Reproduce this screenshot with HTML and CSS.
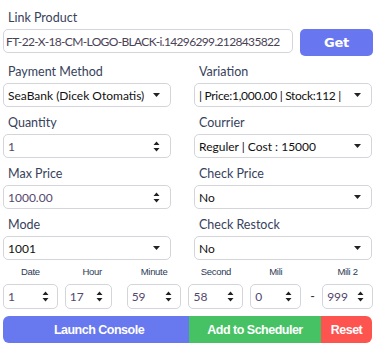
FILE: index.html
```html
<!DOCTYPE html>
<html lang="en">
<head>
    <meta charset="UTF-8">
    <title>Checkout Form</title>
    <link rel="stylesheet" href="styles.css">
</head>
<body>
    <div class="panel">
        <div class="field">
            <label>Link Product</label>
            <div class="link-row">
                <div class="box link-input"><span class="val">FT-22-X-18-CM-LOGO-BLACK-i.14296299.2128435822</span></div>
                <button class="btn-get">Get</button>
            </div>
        </div>

        <div class="grid">
            <div class="field">
                <label>Payment Method</label>
                <div class="box select"><span class="val">SeaBank (Dicek Otomatis)</span><svg class="caret" width="7" height="4" viewBox="0 0 7 4"><path d="M0 0h7L3.5 4z"/></svg></div>
            </div>
            <div class="field right">
                <label>Variation</label>
                <div class="box select tight"><span class="val">| Price:1,000.00 | Stock:112 |<span class="mark"></span></span><svg class="caret" width="7" height="4" viewBox="0 0 7 4"><path d="M0 0h7L3.5 4z"/></svg></div>
            </div>

            <div class="field">
                <label>Quantity</label>
                <div class="box number"><span class="val">1</span><svg class="spin" width="7" height="11" viewBox="0 0 7 11"><path d="M0.5 4h6L3.5 0.5z M0.5 7h6L3.5 10.5z"/></svg></div>
            </div>
            <div class="field right">
                <label>Courrier</label>
                <div class="box select"><span class="val">Reguler | Cost : 15000</span><svg class="caret" width="7" height="4" viewBox="0 0 7 4"><path d="M0 0h7L3.5 4z"/></svg></div>
            </div>

            <div class="field">
                <label>Max Price</label>
                <div class="box number"><span class="val">1000.00</span><svg class="spin" width="7" height="11" viewBox="0 0 7 11"><path d="M0.5 4h6L3.5 0.5z M0.5 7h6L3.5 10.5z"/></svg></div>
            </div>
            <div class="field right">
                <label>Check Price</label>
                <div class="box select"><span class="val">No</span><svg class="caret" width="7" height="4" viewBox="0 0 7 4"><path d="M0 0h7L3.5 4z"/></svg></div>
            </div>

            <div class="field">
                <label>Mode</label>
                <div class="box select"><span class="val">1001</span><svg class="caret" width="7" height="4" viewBox="0 0 7 4"><path d="M0 0h7L3.5 4z"/></svg></div>
            </div>
            <div class="field right">
                <label>Check Restock</label>
                <div class="box select"><span class="val">No</span><svg class="caret" width="7" height="4" viewBox="0 0 7 4"><path d="M0 0h7L3.5 4z"/></svg></div>
            </div>
        </div>

        <div class="time-row">
            <div class="cell">
                <span class="tlabel">Date</span>
                <div class="box number tbox"><span class="val">1</span><svg class="spin" width="7" height="11" viewBox="0 0 7 11"><path d="M0.5 4h6L3.5 0.5z M0.5 7h6L3.5 10.5z"/></svg></div>
            </div>
            <div class="cell">
                <span class="tlabel">Hour</span>
                <div class="box number tbox short"><span class="val">17</span><svg class="spin" width="7" height="11" viewBox="0 0 7 11"><path d="M0.5 4h6L3.5 0.5z M0.5 7h6L3.5 10.5z"/></svg></div>
            </div>
            <div class="cell">
                <span class="tlabel">Minute</span>
                <div class="box number tbox"><span class="val">59</span><svg class="spin" width="7" height="11" viewBox="0 0 7 11"><path d="M0.5 4h6L3.5 0.5z M0.5 7h6L3.5 10.5z"/></svg></div>
            </div>
            <div class="cell">
                <span class="tlabel">Second</span>
                <div class="box number tbox"><span class="val">58</span><svg class="spin" width="7" height="11" viewBox="0 0 7 11"><path d="M0.5 4h6L3.5 0.5z M0.5 7h6L3.5 10.5z"/></svg></div>
            </div>
            <div class="cell narrow">
                <span class="tlabel">Mili</span>
                <div class="box number tbox"><span class="val">0</span><svg class="spin" width="7" height="11" viewBox="0 0 7 11"><path d="M0.5 4h6L3.5 0.5z M0.5 7h6L3.5 10.5z"/></svg></div>
            </div>
            <div class="dash">-</div>
            <div class="cell narrow">
                <span class="tlabel">Mili 2</span>
                <div class="box number tbox"><span class="val">999</span><svg class="spin" width="7" height="11" viewBox="0 0 7 11"><path d="M0.5 4h6L3.5 0.5z M0.5 7h6L3.5 10.5z"/></svg></div>
            </div>
        </div>

        <div class="actions">
            <button class="btn launch">Launch Console</button>
            <button class="btn schedule">Add to Scheduler</button>
            <button class="btn reset">Reset</button>
        </div>
    </div>
</body>
</html>
```

FILE: styles.css
```css
body {
    margin: 0;
    background: #fff;
    font-family: Lato, "Noto Sans", sans-serif;
    font-size: 12.5px;
}
.panel {
    width: 370px;
    padding: 10px 0 0 3px;
    display: flex;
    flex-direction: column;
}
.field {
    display: flex;
    flex-direction: column;
    gap: 3px;
}
.field label {
    padding-left: 5px;
    color: #37425c;
    line-height: 16px;
    height: 16px;
}
.link-row {
    display: flex;
    align-items: flex-start;
    gap: 7px;
}
.box {
    box-sizing: border-box;
    height: 24px;
    border: 1px solid #d3d5da;
    border-radius: 5px;
    display: flex;
    align-items: center;
    padding: 0 10px 0 4px;
    overflow: hidden;
    white-space: nowrap;
    font-size: 12px;
}
.box .val {
    flex: 1;
    overflow: hidden;
}
.link-input {
    width: 290px;
    padding-left: 2px;
    padding-right: 2px;
    color: #4a4257;
    letter-spacing: -0.65px;
}
.btn-get {
    width: 73px;
    height: 27px;
    border: none;
    border-radius: 5px;
    background: #6877ef;
    color: #fff;
    font-family: "DejaVu Sans", Verdana, sans-serif;
    font-weight: bold;
    font-size: 13px;
    letter-spacing: -0.3px;
}
.grid {
    display: grid;
    grid-template-columns: 168px 178px;
    column-gap: 23px;
    row-gap: 8px;
    margin-top: 8px;
}
.select { color: #111; }
.select.tight { letter-spacing: -0.3px; }
.number { color: #54476e; }
.caret path, .spin path { fill: #222; }
.mark {
    display: inline-block;
    width: 1px;
    height: 11px;
    margin-left: 14px;
    background: #f3e79a;
    vertical-align: middle;
}
.time-row {
    display: flex;
    align-items: flex-end;
    gap: 7px;
    margin-top: 6px;
}
.cell {
    width: 55px;
    display: flex;
    flex-direction: column;
    gap: 7px;
}
.cell.narrow { width: 51px; }
.tlabel {
    text-align: center;
    font-family: "Liberation Sans", Arial, sans-serif;
    font-size: 9.5px;
    letter-spacing: -0.3px;
    color: #2c3a58;
    line-height: 11px;
}
.tbox {
    height: 25px;
    padding-right: 8px;
}
.tbox.short { width: 47px; }
.dash {
    width: 5px;
    height: 25px;
    line-height: 25px;
    color: #333;
    text-align: center;
    margin-left: 2px;
}
.actions {
    display: flex;
    margin-top: 7px;
    height: 27px;
}
.btn {
    border: none;
    color: #fff;
    font-family: "Liberation Sans", Arial, sans-serif;
    font-weight: bold;
    font-size: 12.5px;
    letter-spacing: -0.5px;
    padding: 0;
}
.launch {
    width: 186px;
    padding-left: 6px;
    background: #6878ee;
    border-radius: 6px 0 0 6px;
}
.schedule {
    width: 132px;
    background: #46c264;
}
.reset {
    width: 51px;
    background: #fe5450;
    border-radius: 0 6px 6px 0;
}
```
